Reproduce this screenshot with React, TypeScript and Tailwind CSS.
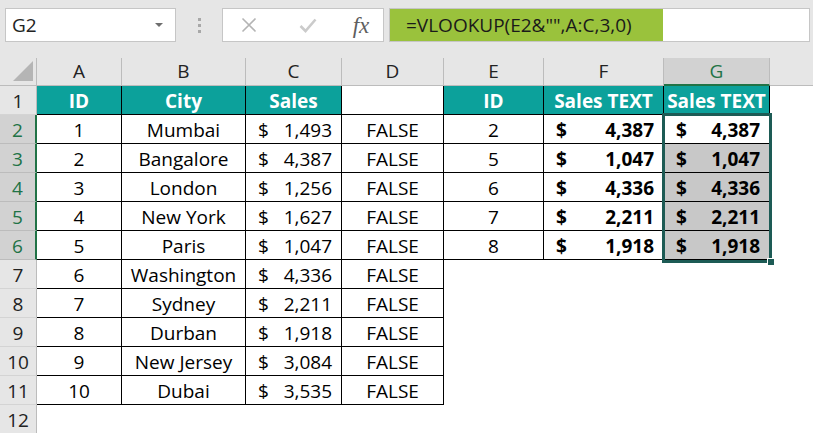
import React from "react"

const TEAL = "bg-[#0ca19b]"

type Row = { id: number; city: string; sales: string }

const LEFT: Row[] = [
  { id: 1, city: "Mumbai", sales: "1,493" },
  { id: 2, city: "Bangalore", sales: "4,387" },
  { id: 3, city: "London", sales: "1,256" },
  { id: 4, city: "New York", sales: "1,627" },
  { id: 5, city: "Paris", sales: "1,047" },
  { id: 6, city: "Washington", sales: "4,336" },
  { id: 7, city: "Sydney", sales: "2,211" },
  { id: 8, city: "Durban", sales: "1,918" },
  { id: 9, city: "New Jersey", sales: "3,084" },
  { id: 10, city: "Dubai", sales: "3,535" },
]

const RIGHT = [
  { id: 2, sales: "4,387" },
  { id: 5, sales: "1,047" },
  { id: 6, sales: "4,336" },
  { id: 7, sales: "2,211" },
  { id: 8, sales: "1,918" },
]

const COLS = ["A", "B", "C", "D", "E", "F", "G"]

const BORDER = "border-r border-b border-black"

function Cell({
  children,
  className = "",
}: {
  children?: React.ReactNode
  className?: string
}) {
  return (
    <div className={`h-[29px] pt-[2px] flex items-center overflow-hidden whitespace-nowrap ${className}`}>
      {children}
    </div>
  )
}

function Money({ value, bold, className = "" }: { value: string; bold?: boolean; className?: string }) {
  return (
    <Cell className={`${BORDER} justify-between pl-[12px] pr-[9px] ${bold ? "font-bold" : ""} ${className}`}>
      <span>$</span>
      <span>{value}</span>
    </Cell>
  )
}

function RowHead({ n, selected }: { n: number; selected?: boolean }) {
  return (
    <div
      className={[
        "h-[29px] pt-[2px] flex items-center justify-center border-b",
        selected
          ? "bg-[#d2d2d2] text-[#217346] border-r-2 border-r-[#217346] border-b-[#bcbcbc]"
          : "bg-[#e6e6e6] text-[#222] border-r border-r-[#bcbcbc] border-b-[#d4d4d4]",
      ].join(" ")}
    >
      {n}
    </div>
  )
}

function FormulaBar() {
  return (
    <div className="h-[58px] flex items-start pt-[8px] pl-[5px] bg-[#e6e6e6]">
      <div className="w-[171px] h-[34px] bg-white border border-[#c6c6c6] flex items-center justify-between pl-[6px] pr-[12px]">
        <span className="text-[19px] text-[#222]">G2</span>
        <span className="w-0 h-0 border-l-[4px] border-r-[4px] border-t-[4px] border-l-transparent border-r-transparent border-t-[#6e6e6e]" />
      </div>
      <div className="w-[46px] h-[34px] flex flex-col items-center justify-center gap-[3px]">
        <span className="w-[3px] h-[3px] bg-[#a8a8a8]" />
        <span className="w-[3px] h-[3px] bg-[#a8a8a8]" />
        <span className="w-[3px] h-[3px] bg-[#a8a8a8]" />
      </div>
      <div className="w-[162px] h-[34px] bg-white border border-[#c6c6c6] flex items-center">
        <div className="w-[52px] flex justify-center">
          <svg width="16" height="16" viewBox="0 0 16 16">
            <path d="M1.5 1.5 L14.5 14.5 M14.5 1.5 L1.5 14.5" stroke="#b4b4b4" strokeWidth="1.6" fill="none" />
          </svg>
        </div>
        <div className="w-[66px] flex justify-center">
          <svg width="18" height="15" viewBox="0 0 18 15">
            <path d="M1.5 8 L6.5 13 L16.5 1.5" stroke="#cbcbcb" strokeWidth="2.6" fill="none" />
          </svg>
        </div>
        <div className="flex-1 flex justify-center pr-[2px]">
          <span className="font-['Liberation_Serif',serif] italic text-[23px] leading-none text-[#5e5e5e]">fx</span>
        </div>
      </div>
      <div className="ml-[5px] w-[421px] h-[34px] bg-white border border-[#c6c6c6] flex">
        <div className="w-[273px] h-full bg-[#9ac23c] flex items-center pl-[16px] text-[19px] text-[#1a1a1a]">
          =VLOOKUP(E2&amp;&quot;&quot;,A:C,3,0)
        </div>
      </div>
    </div>
  )
}

export default function App() {
  return (
    <div className="w-[813px] h-[433px] overflow-hidden bg-white font-['Open_Sans',sans-serif] text-[19px] text-black">
      <FormulaBar />
      <div className="relative grid grid-cols-[37px_85px_124px_96px_102px_100px_120px_106px_1fr]">
        {/* column headers */}
        <div className="h-[28px] bg-[#e6e6e6] border-r border-b border-[#bcbcbc] relative">
          <svg className="absolute right-[3px] bottom-[4px]" width="20" height="20" viewBox="0 0 20 20">
            <path d="M20 0 L20 20 L0 20 Z" fill="#b5b5b5" />
          </svg>
        </div>
        {COLS.map((c) =>
          c === "G" ? (
            <div
              key={c}
              className="h-[28px] bg-[#d2d2d2] text-[#217346] border-r border-r-[#bcbcbc] border-b-2 border-b-[#217346] flex items-center justify-center"
            >
              {c}
            </div>
          ) : (
            <div
              key={c}
              className="h-[28px] bg-[#e6e6e6] text-[#222] border-r border-b border-[#bcbcbc] flex items-center justify-center"
            >
              {c}
            </div>
          )
        )}
        <div className="h-[28px] bg-[#e6e6e6] border-b border-[#bcbcbc]" />

        {/* row 1 */}
        <RowHead n={1} />
        <Cell className={`${BORDER} ${TEAL} justify-center text-white font-bold`}>ID</Cell>
        <Cell className={`${BORDER} ${TEAL} justify-center text-white font-bold`}>City</Cell>
        <Cell className={`${BORDER} ${TEAL} justify-center text-white font-bold`}>Sales</Cell>
        <Cell className={BORDER} />
        <Cell className={`${BORDER} ${TEAL} justify-center text-white font-bold`}>ID</Cell>
        <Cell className={`${BORDER} ${TEAL} justify-center text-white font-bold`}>Sales TEXT</Cell>
        <Cell className={`${BORDER} ${TEAL} justify-center text-white font-bold`}>Sales TEXT</Cell>
        <Cell />

        {/* data rows */}
        {LEFT.map((r, i) => {
          const right = RIGHT[i]
          return (
            <React.Fragment key={r.id}>
              <RowHead n={i + 2} selected={i < 5} />
              <Cell className={`${BORDER} justify-center`}>{r.id}</Cell>
              <Cell className={`${BORDER} justify-center`}>{r.city}</Cell>
              <Money value={r.sales} />
              <Cell className={`${BORDER} justify-center`}>FALSE</Cell>
              {right ? (
                <>
                  <Cell className={`${BORDER} justify-center`}>{right.id}</Cell>
                  <Money value={right.sales} bold />
                  <Money value={right.sales} bold className={i === 0 ? "bg-white" : "bg-[#c8c8c8]"} />
                </>
              ) : (
                <>
                  <Cell />
                  <Cell />
                  <Cell />
                </>
              )}
              <Cell />
            </React.Fragment>
          )
        })}

        {/* row 12 */}
        <RowHead n={12} />
        <Cell />
        <Cell />
        <Cell />
        <Cell />
        <Cell />
        <Cell />
        <Cell />
        <Cell />

        {/* selection G2:G6 */}
        <div className="absolute left-[662px] top-[55px] w-[110px] h-[150px] border-[3px] border-[#1d5b55] pointer-events-none">
          <span className="absolute -right-[5px] -bottom-[5px] w-[7px] h-[7px] bg-[#1d5b55] border-l border-t border-white" />
        </div>
      </div>
    </div>
  )
}
